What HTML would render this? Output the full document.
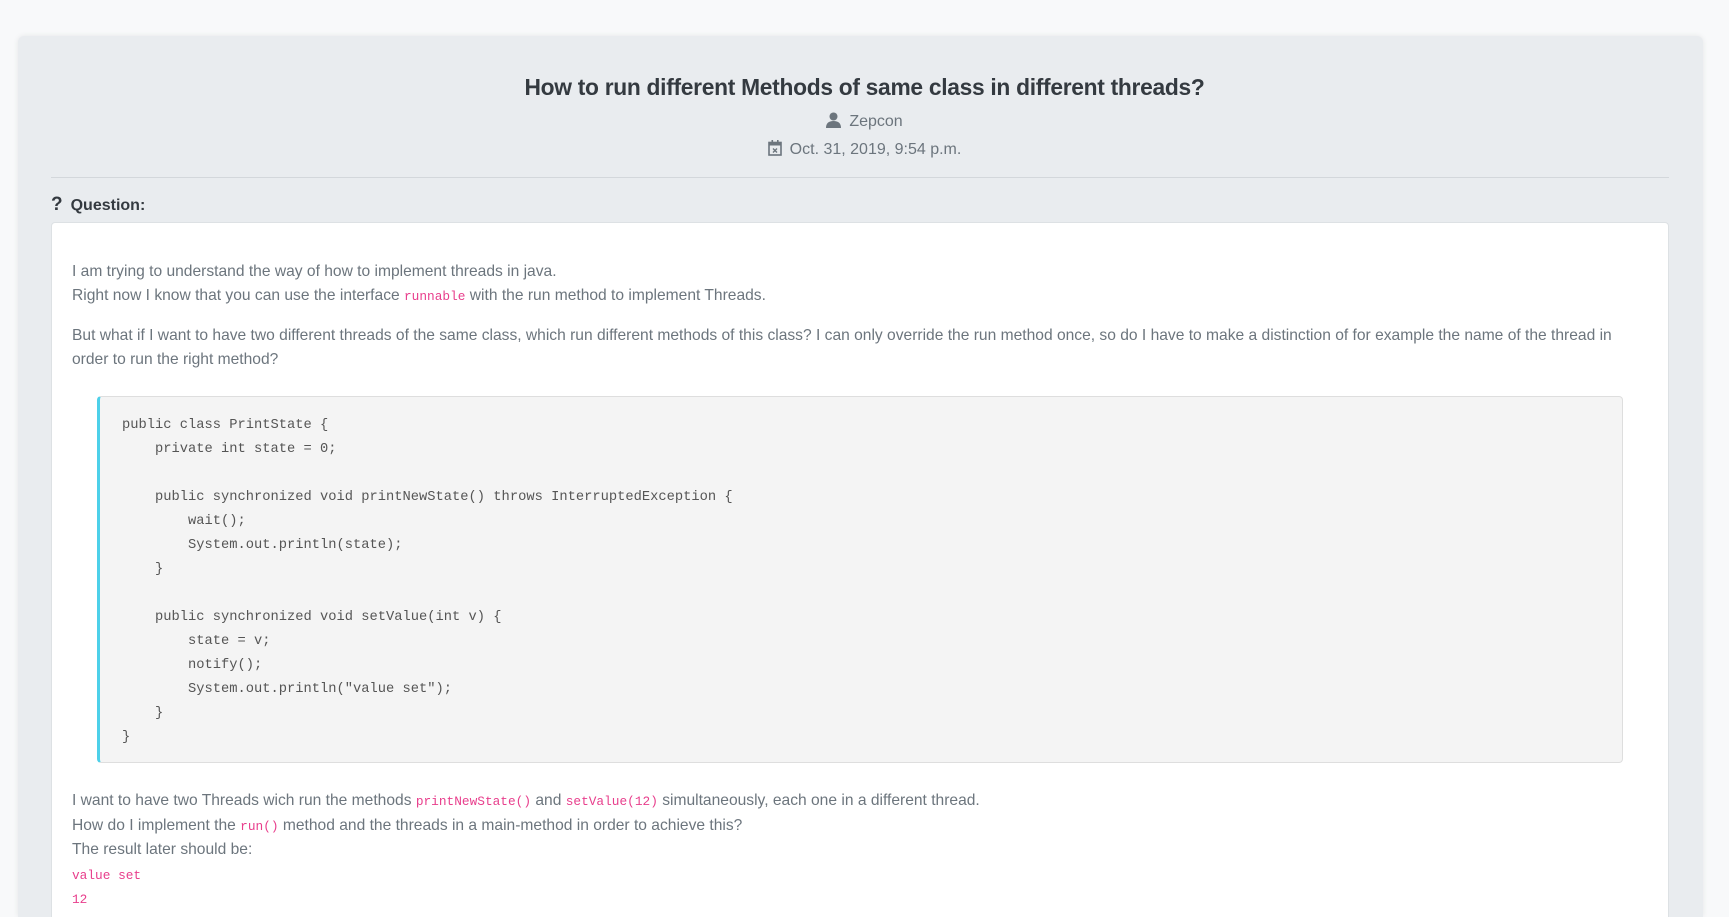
<!DOCTYPE html>
<html style="overflow:hidden;width:1729px;height:917px"><head><meta charset="utf-8"><style>
*{box-sizing:border-box;margin:0;padding:0}
body{width:1729px;height:917px;overflow:hidden;background:#f8f9fa;font-family:"Liberation Sans",sans-serif;position:relative}
.card{position:absolute;left:18px;top:36px;width:1685px;height:881px;background:#e9ecef;border-radius:6px 6px 0 0;box-shadow:0 0 6px rgba(0,0,0,.08)}
.abs{position:absolute;white-space:nowrap}
.title{left:0;width:1729px;text-align:center;top:74px;font-size:22.8px;font-weight:bold;color:#343a40;letter-spacing:-0.3px}
.meta{left:0;width:1729px;text-align:center;font-size:16px;color:#6c757d}
.hr{position:absolute;left:51px;top:177px;width:1618px;height:1px;background:#d3d7db}
.q{left:51px;top:194px;font-size:16px;font-weight:bold;color:#343a40}
.box{position:absolute;left:51px;top:222px;width:1618px;height:695px;background:#fff;border:1px solid #dde1e4;border-bottom:none;border-radius:4px 4px 0 0}
.p{left:72px;font-size:15.6px;color:#6c757d}
code{font-family:"Liberation Mono",monospace;font-size:12.8px;color:#e83e8c}
.pre{position:absolute;left:97px;top:396px;width:1526px;height:367px;background:#f4f4f4;border:1px solid #dedede;border-left:3px solid #4dd0e9;border-radius:4px}
.c{position:absolute;left:122px;font-family:"Liberation Mono",monospace;font-size:13.75px;line-height:24px;color:#555;white-space:pre}
</style></head><body>
<div class="card"></div>
<div class="abs title">How to run different Methods of same class in different threads?</div>
<div class="abs meta" style="top:112px"><svg width="15" height="16" viewBox="0 0 15 16" style="vertical-align:-2px;margin-right:8px"><circle cx="7.5" cy="4.5" r="4" fill="#6c757d"/><path d="M0 16 Q0 9 7.5 9 Q15 9 15 16Z" fill="#6c757d"/></svg>Zepcon</div>
<div class="abs meta" style="top:140px"><svg width="14" height="16" viewBox="0 0 14 16" style="vertical-align:-2px;margin-right:8px"><rect x="1" y="2.5" width="12" height="12.5" fill="none" stroke="#6c757d" stroke-width="1.6"/><rect x="1" y="2.5" width="12" height="3" fill="#6c757d"/><rect x="3.5" y="0" width="1.6" height="3" fill="#6c757d"/><rect x="9" y="0" width="1.6" height="3" fill="#6c757d"/><path d="M5 8.5 L9 12.5 M9 8.5 L5 12.5" stroke="#6c757d" stroke-width="1.4"/></svg>Oct. 31, 2019, 9:54 p.m.</div>
<div class="hr"></div>
<div class="abs q"><span style="font-size:19px;margin-right:8px">?</span>Question:</div>
<div class="box"></div>
<div class="abs p" style="top:263px">I am trying to understand the way of how to implement threads in java.</div>
<div class="abs p" style="top:287px">Right now I know that you can use the interface <code>runnable</code> with the run method to implement Threads.</div>
<div class="abs p" style="top:327px">But what if I want to have two different threads of the same class, which run different methods of this class? I can only override the run method once, so do I have to make a distinction of for example the name of the thread in</div>
<div class="abs p" style="top:351px">order to run the right method?</div>
<div class="pre"></div>
<div class="c" style="top:414px">public class PrintState {
    private int state = 0;

    public synchronized void printNewState() throws InterruptedException {
        wait();
        System.out.println(state);
    }

    public synchronized void setValue(int v) {
        state = v;
        notify();
        System.out.println("value set");
    }
}</div>
<div class="abs p" style="top:792px">I want to have two Threads wich run the methods <code>printNewState()</code> and <code>setValue(12)</code> simultaneously, each one in a different thread.</div>
<div class="abs p" style="top:817px">How do I implement the <code>run()</code> method and the threads in a main-method in order to achieve this?</div>
<div class="abs p" style="top:841px">The result later should be:</div>
<div class="abs p" style="top:866px"><code>value set</code></div>
<div class="abs p" style="top:890px"><code>12</code></div>
</body></html>
